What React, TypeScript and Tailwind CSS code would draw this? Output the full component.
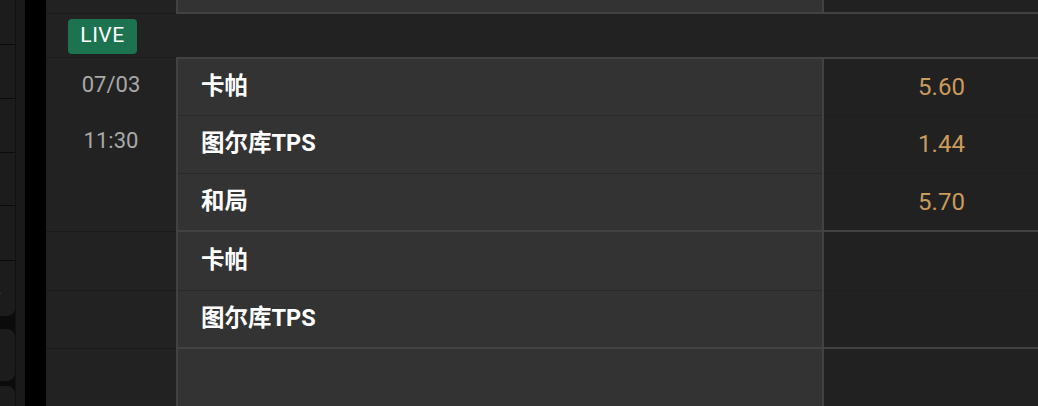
import React from "react";

const FONT = "font-['Roboto','Noto_Sans_CJK_SC',sans-serif]";

function TeamRow({ name, h, last }: { name: string; h: string; last?: boolean }) {
  return (
    <div className={`${h} shrink-0 flex items-center pl-[23px] pb-[1px] text-[23.5px] font-bold text-white ${last ? "" : "border-b border-[#2a2a2a]"}`}>
      {name}
    </div>
  );
}

function OddsRow({ v, h, last }: { v?: string; h: string; last?: boolean }) {
  return (
    <div className={`${h} shrink-0 flex items-center justify-center pl-[21px] pb-[1px] text-[24px] text-[#c99b5c] ${last ? "" : "border-b border-[#1e1e1e]"}`}>
      {v}
    </div>
  );
}

export default function App() {
  return (
    <div className={`w-[1038px] h-[406px] overflow-hidden flex bg-black ${FONT}`}>
      {/* left sidebar */}
      <div className="w-[25px] shrink-0 flex">
        <div className="w-[15px] flex flex-col bg-[#0b0b0b] overflow-hidden">
          <div className="shrink-0 flex flex-col gap-[1px] rounded-br-[8px] overflow-hidden">
            <div className="h-[44px] shrink-0 bg-[#1c1c1c]" />
            <div className="h-[53px] shrink-0 bg-[#1c1c1c]" />
            <div className="h-[53px] shrink-0 bg-[#1c1c1c]" />
            <div className="h-[52px] shrink-0 bg-[#1c1c1c] flex items-center overflow-hidden">
              <span className="ml-[-6px] mt-[-6px] text-[12px] text-[#777] leading-none">s</span>
            </div>
            <div className="h-[54px] shrink-0 bg-[#1c1c1c] flex items-center overflow-hidden">
              <span className="ml-[-4px] mt-[-4px] text-[12px] text-[#777] leading-none">)</span>
            </div>
            <div className="h-[55px] shrink-0 bg-[#1c1c1c] flex items-center overflow-hidden">
              <span className="ml-[-2px] mt-[2px] text-[12px] text-[#777] leading-none">.</span>
            </div>
          </div>
          <div className="h-[13px] shrink-0" />
          <div className="h-[52px] shrink-0 bg-[#1c1c1c] rounded-r-[8px]" />
          <div className="h-[5px] shrink-0" />
          <div className="h-[60px] shrink-0 bg-[#1c1c1c] rounded-tr-[8px]" />
        </div>
        <div className="w-[1px] bg-[#111111]" />
        <div className="flex-1 bg-[#1a1a1a]" />
      </div>
      <div className="w-[21px] shrink-0 bg-black" />

      {/* main */}
      <div className="w-[992px] shrink-0 flex flex-col bg-[#222222]">
        {/* top stub */}
        <div className="h-[14px] flex shrink-0">
          <div className="w-[130px] border-b border-[#1b1b1b]" />
          <div className="w-[646px] bg-[#333333] border-l-2 border-b-2 border-[#424242]" />
          <div className="flex-1 bg-[#212121] border-l-2 border-b-2 border-[#424242]" />
        </div>

        {/* LIVE row */}
        <div className="h-[43px] shrink-0 flex items-center pl-[22px] pt-[1px]">
          <div className="h-[35px] w-[69px] rounded-[4px] bg-[#1d7350] flex items-center justify-center text-[21px] text-white tracking-[0.5px]">
            LIVE
          </div>
        </div>

        {/* market 1 */}
        <div className="flex shrink-0">
          <div className="w-[130px] h-[175px] border-t border-b border-[#1b1b1b] flex flex-col text-[22px] text-[#a9a9a9]">
            <div className="h-[53px] shrink-0 flex items-center justify-center">07/03</div>
            <div className="h-[58px] shrink-0 flex items-center justify-center">11:30</div>
          </div>
          <div className="w-[646px] h-[175px] bg-[#333333] border-l-2 border-t-2 border-b-2 border-[#424242] flex flex-col">
            <TeamRow name="卡帕" h="h-[57px]" />
            <TeamRow name="图尔库TPS" h="h-[58px]" />
            <TeamRow name="和局" h="h-[56px]" last />
          </div>
          <div className="flex-1 h-[175px] bg-[#212121] border-l-2 border-t-2 border-b-2 border-[#424242] flex flex-col">
            <OddsRow v="5.60" h="h-[57px]" />
            <OddsRow v="1.44" h="h-[58px]" />
            <OddsRow v="5.70" h="h-[56px]" last />
          </div>
        </div>

        {/* market 2 */}
        <div className="flex shrink-0">
          <div className="w-[130px] h-[117px] flex flex-col">
            <div className="h-[59px] shrink-0 border-b border-[#1b1b1b]" />
            <div className="h-[58px] shrink-0 border-b border-[#1b1b1b]" />
          </div>
          <div className="w-[646px] h-[117px] bg-[#333333] border-l-2 border-b-2 border-[#424242] flex flex-col">
            <TeamRow name="卡帕" h="h-[59px]" />
            <TeamRow name="图尔库TPS" h="h-[56px]" last />
          </div>
          <div className="flex-1 h-[117px] bg-[#212121] border-l-2 border-b-2 border-[#424242] flex flex-col">
            <OddsRow h="h-[59px]" />
            <OddsRow h="h-[56px]" last />
          </div>
        </div>

        {/* market 3 */}
        <div className="flex shrink-0">
          <div className="w-[130px] h-[60px]" />
          <div className="w-[646px] h-[60px] bg-[#333333] border-l-2 border-[#424242]" />
          <div className="flex-1 h-[60px] bg-[#212121] border-l-2 border-[#424242]" />
        </div>
      </div>
    </div>
  );
}
